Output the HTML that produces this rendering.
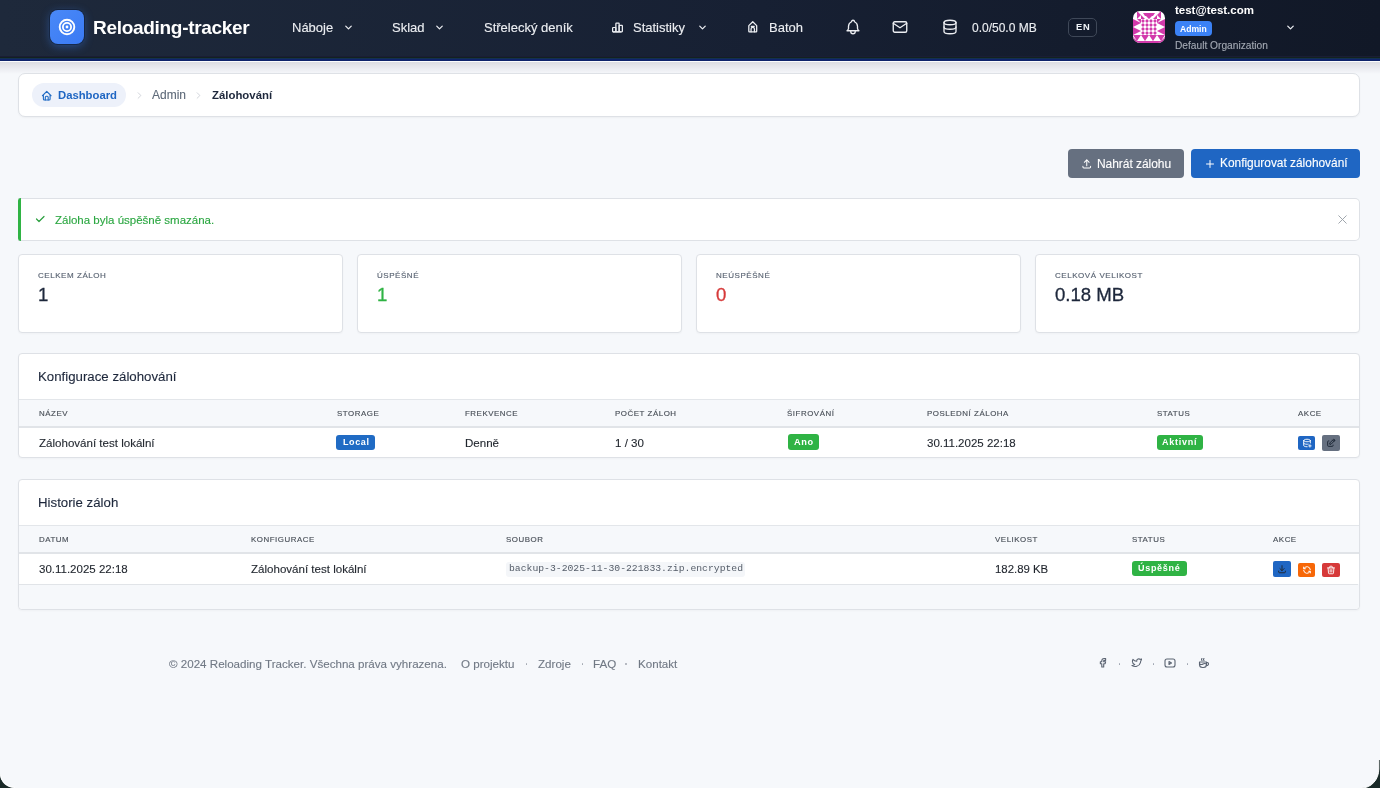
<!DOCTYPE html>
<html lang="cs"><head><meta charset="utf-8"><title>Zálohování - Reloading-tracker</title>
<style>
html,body{margin:0;padding:0;}
body{width:1380px;height:788px;overflow:hidden;position:relative;background:#f6f8fb;font-family:"Liberation Sans",sans-serif;}
.t{will-change:transform;position:absolute;line-height:1;white-space:nowrap;-webkit-text-stroke:0.12px currentColor;}
.b{position:absolute;display:block;}
</style></head><body>
<div class="b" style="left:0px;top:0px;width:1380px;height:57px;background:linear-gradient(90deg,#1e293b 0%,#172033 55%,#111827 100%);"></div>
<div class="b" style="left:0px;top:56px;width:1380px;height:1px;background:#1a1d35;"></div>
<div class="b" style="left:0px;top:57px;width:1380px;height:1px;background:#13221f;"></div>
<div class="b" style="left:0px;top:58px;width:1380px;height:1px;background:#143050;"></div>
<div class="b" style="left:0px;top:59px;width:1380px;height:1.5px;background:#0e236a;"></div>
<div class="b" style="left:0px;top:60.5px;width:1380px;height:1.5px;background:#fbfcfc;"></div>
<div class="b" style="left:0px;top:62px;width:1380px;height:12px;background:linear-gradient(180deg,#dcdde2 0%,#e8e9ee 45%,#f6f8fb 100%);"></div>
<div class="b" style="left:50px;top:10px;width:34px;height:34px;background:linear-gradient(135deg,#4a89f7,#3a7af4);border-radius:8px;box-shadow:0 0 0 1px rgba(10,20,40,.5),0 2px 10px rgba(59,130,246,.45);"></div>
<svg class="b" style="left:58px;top:18px" width="18" height="18" viewBox="0 0 18 18"><circle cx="9" cy="9" r="7.3" fill="none" stroke="#fff" stroke-width="1.9"/><circle cx="9" cy="9" r="4.1" fill="none" stroke="#fff" stroke-width="1.8"/><circle cx="9" cy="9" r="1.4" fill="#fff"/></svg>
<div class="t" style="left:92.6px;top:18.12px;font-size:19px;color:#ffffff;font-weight:bold;-webkit-text-stroke:0;letter-spacing:-0.3px;">Reloading-tracker</div>
<div class="t" style="left:292px;top:20.50px;font-size:13px;color:#eceef2;">Náboje</div>
<div class="t" style="left:392px;top:20.50px;font-size:13px;color:#eceef2;">Sklad</div>
<div class="t" style="left:484px;top:20.50px;font-size:13px;color:#eceef2;">Střelecký deník</div>
<div class="t" style="left:633px;top:20.50px;font-size:13px;color:#eceef2;">Statistiky</div>
<div class="t" style="left:769px;top:20.50px;font-size:13px;color:#eceef2;">Batoh</div>
<svg class="b" style="left:342.5px;top:22.1px" width="11" height="11" viewBox="0 0 24 24" fill="none" stroke="#eceef2" stroke-width="2.7" stroke-linecap="round" stroke-linejoin="round"><path d="M6 9l6 6l6 -6"/></svg>
<svg class="b" style="left:434.0px;top:22.1px" width="11" height="11" viewBox="0 0 24 24" fill="none" stroke="#eceef2" stroke-width="2.7" stroke-linecap="round" stroke-linejoin="round"><path d="M6 9l6 6l6 -6"/></svg>
<svg class="b" style="left:696.8px;top:22.1px" width="11" height="11" viewBox="0 0 24 24" fill="none" stroke="#eceef2" stroke-width="2.7" stroke-linecap="round" stroke-linejoin="round"><path d="M6 9l6 6l6 -6"/></svg>
<svg class="b" style="left:1284.8px;top:22.1px" width="11" height="11" viewBox="0 0 24 24" fill="none" stroke="#eceef2" stroke-width="2.7" stroke-linecap="round" stroke-linejoin="round"><path d="M6 9l6 6l6 -6"/></svg>
<svg class="b" style="left:611px;top:20.8px" width="13" height="13" viewBox="0 0 24 24" fill="none" stroke="#eceef2" stroke-width="2.3" stroke-linecap="round" stroke-linejoin="round"><path d="M3 13a1 1 0 0 1 1 -1h4a1 1 0 0 1 1 1v6a1 1 0 0 1 -1 1h-4a1 1 0 0 1 -1 -1z"/><path d="M9 5a1 1 0 0 1 1 -1h4a1 1 0 0 1 1 1v14a1 1 0 0 1 -1 1h-4a1 1 0 0 1 -1 -1z"/><path d="M15 9a1 1 0 0 1 1 -1h4a1 1 0 0 1 1 1v10a1 1 0 0 1 -1 1h-4a1 1 0 0 1 -1 -1z"/><path d="M4 20h14"/></svg>
<svg class="b" style="left:746.2px;top:19.8px" width="13.5" height="13.5" viewBox="0 0 24 24" fill="none" stroke="#eceef2" stroke-width="2.3" stroke-linecap="round" stroke-linejoin="round"><path d="M5 20v-10l7 -7l7 7v10a1 1 0 0 1 -1 1h-12a1 1 0 0 1 -1 -1z"/><path d="M9 21v-5a3 3 0 0 1 6 0v5"/><path d="M9.5 11.5h5"/></svg>
<svg class="b" style="left:844.3px;top:18.1px" width="18" height="18" viewBox="0 0 24 24" fill="none" stroke="#eceef2" stroke-width="1.8" stroke-linecap="round" stroke-linejoin="round"><path d="M10 5a2 2 0 1 1 4 0a7 7 0 0 1 4 6v3a4 4 0 0 0 2 3h-16a4 4 0 0 0 2 -3v-3a7 7 0 0 1 4 -6"/><path d="M9 17v1a3 3 0 0 0 6 0v-1"/></svg>
<svg class="b" style="left:891px;top:18.2px" width="18" height="18" viewBox="0 0 24 24" fill="none" stroke="#eceef2" stroke-width="1.8" stroke-linecap="round" stroke-linejoin="round"><path d="M3 7a2 2 0 0 1 2 -2h14a2 2 0 0 1 2 2v10a2 2 0 0 1 -2 2h-14a2 2 0 0 1 -2 -2v-10z"/><path d="M3 7l9 6l9 -6"/></svg>
<svg class="b" style="left:940.7px;top:18.2px" width="18" height="18" viewBox="0 0 24 24" fill="none" stroke="#eceef2" stroke-width="1.8" stroke-linecap="round" stroke-linejoin="round"><path d="M4 6a8 3 0 1 0 16 0a8 3 0 1 0 -16 0"/><path d="M4 6v6a8 3 0 0 0 16 0v-6"/><path d="M4 12v6a8 3 0 0 0 16 0v-6"/></svg>
<div class="t" style="left:972px;top:22.14px;font-size:12px;color:#eceef2;">0.0/50.0 MB</div>
<div class="b" style="left:1068px;top:18px;width:29px;height:18.5px;border:1.5px solid #3f4858;border-radius:5px;box-sizing:border-box;"></div>
<div class="t" style="left:1076.3px;top:23.13px;font-size:9.3px;color:#f1f5f9;font-weight:bold;-webkit-text-stroke:0;letter-spacing:0.9px;">EN</div>
<svg class="b" style="left:1133px;top:11px" width="32" height="32" viewBox="0 0 32 32"><defs><clipPath id="avc"><rect width="32" height="32" rx="7"/></clipPath></defs><g clip-path="url(#avc)"><rect width="32" height="32" fill="#ffffff"/><path d="M0 0L4 0L0 4ZM32 0L28 0L32 4ZM4 0L8 4L4 8ZM28 0L24 4L28 8ZM10 2L22 2L20 5L12 5ZM13 5L19 5L16 8ZM8 4L12 8L8 8ZM24 4L20 8L24 8ZM0 8L8 12L0 16ZM32 8L24 12L32 16ZM0 16L8 20L0 24ZM32 16L24 20L32 24ZM4 8L8 8L8 12ZM28 8L24 8L24 12ZM10 8.1L11.9 10L10 11.9L8.1 10ZM14 8.1L15.9 10L14 11.9L12.1 10ZM18 8.1L19.9 10L18 11.9L16.1 10ZM22 8.1L23.9 10L22 11.9L20.1 10ZM10 12.1L11.9 14L10 15.9L8.1 14ZM14 12.1L15.9 14L14 15.9L12.1 14ZM18 12.1L19.9 14L18 15.9L16.1 14ZM22 12.1L23.9 14L22 15.9L20.1 14ZM10 16.1L11.9 18L10 19.9L8.1 18ZM14 16.1L15.9 18L14 19.9L12.1 18ZM18 16.1L19.9 18L18 19.9L16.1 18ZM22 16.1L23.9 18L22 19.9L20.1 18ZM10 20.1L11.9 22L10 23.9L8.1 22ZM14 20.1L15.9 22L14 23.9L12.1 22ZM18 20.1L19.9 22L18 23.9L16.1 22ZM22 20.1L23.9 22L22 23.9L20.1 22ZM0 24L8 24L4 30ZM8 24L16 24L12 30ZM16 24L24 24L20 30ZM24 24L32 24L28 30ZM0 30L32 30L32 32L0 32ZM0 26L4 30L0 30ZM32 26L28 30L32 30Z" fill="#d23aab"/></g></svg>
<div class="t" style="left:1175px;top:5.27px;font-size:11.5px;color:#ffffff;font-weight:bold;-webkit-text-stroke:0;">test@test.com</div>
<div class="b" style="left:1175px;top:21px;width:37px;height:15px;background:#3b82f6;border-radius:4px;"></div>
<div class="t" style="left:1180px;top:24.52px;font-size:8.6px;color:#ffffff;font-weight:bold;-webkit-text-stroke:0;">Admin</div>
<div class="t" style="left:1175px;top:40.67px;font-size:10.2px;color:#a3a9b3;">Default Organization</div>
<div class="b" style="left:18px;top:73px;width:1342px;height:44px;background:#fff;border:1px solid #dee1e6;border-radius:7px;box-sizing:border-box;box-shadow:0 1px 2px rgba(0,0,0,.04);"></div>
<div class="b" style="left:32px;top:83px;width:94px;height:24px;background:#edf1fa;border-radius:12px;"></div>
<svg class="b" style="left:41px;top:89.5px" width="11.5" height="11.5" viewBox="0 0 24 24" fill="none" stroke="#206bc4" stroke-width="2.3" stroke-linecap="round" stroke-linejoin="round"><path d="M5 12l-2 0l9 -9l9 9l-2 0"/><path d="M5 12v7a2 2 0 0 0 2 2h10a2 2 0 0 0 2 -2v-7"/><path d="M9 21v-6a2 2 0 0 1 2 -2h2a2 2 0 0 1 2 2v6"/></svg>
<div class="t" style="left:58px;top:89.83px;font-size:11.3px;color:#1f66c3;font-weight:bold;-webkit-text-stroke:0;">Dashboard</div>
<svg class="b" style="left:133.5px;top:89.5px" width="11" height="11" viewBox="0 0 24 24" fill="none" stroke="#c8ccd3" stroke-width="1.8" stroke-linecap="round" stroke-linejoin="round"><path d="M9 6l6 6l-6 6"/></svg>
<svg class="b" style="left:193px;top:89.5px" width="11" height="11" viewBox="0 0 24 24" fill="none" stroke="#c8ccd3" stroke-width="1.8" stroke-linecap="round" stroke-linejoin="round"><path d="M9 6l6 6l-6 6"/></svg>
<div class="t" style="left:152px;top:89.24px;font-size:12px;color:#5f6b7a;">Admin</div>
<div class="t" style="left:211.5px;top:89.75px;font-size:11.4px;color:#1d273b;font-weight:bold;-webkit-text-stroke:0;">Zálohování</div>
<div class="b" style="left:1068px;top:149px;width:116px;height:29px;background:#667080;border-radius:4px;"></div>
<svg class="b" style="left:1081px;top:158.3px" width="11.5" height="11.5" viewBox="0 0 24 24" fill="none" stroke="#fff" stroke-width="2.1" stroke-linecap="round" stroke-linejoin="round"><path d="M4 17v2a2 2 0 0 0 2 2h12a2 2 0 0 0 2 -2v-2"/><path d="M7 9l5 -5l5 5"/><path d="M12 4l0 12"/></svg>
<div class="t" style="left:1096.5px;top:158.04px;font-size:12px;color:#ffffff;letter-spacing:-0.05px;">Nahrát zálohu</div>
<div class="b" style="left:1191px;top:149px;width:169px;height:29px;background:#1f66c3;border-radius:4px;"></div>
<svg class="b" style="left:1204.3px;top:157.8px" width="12" height="12" viewBox="0 0 24 24" fill="none" stroke="#fff" stroke-width="2" stroke-linecap="round" stroke-linejoin="round"><path d="M12 5l0 14"/><path d="M5 12l14 0"/></svg>
<div class="t" style="left:1219.5px;top:158.13px;font-size:11.9px;color:#ffffff;">Konfigurovat zálohování</div>
<div class="b" style="left:18px;top:198px;width:1342px;height:43px;background:#fff;border:1px solid #dee1e6;border-left:0;border-radius:0 5px 5px 0;box-sizing:border-box;"></div>
<div class="b" style="left:17.5px;top:198px;width:3.5px;height:43px;background:#2fb344;border-radius:3px 0 0 3px;"></div>
<svg class="b" style="left:33.5px;top:213.3px" width="12" height="12" viewBox="0 0 24 24" fill="none" stroke="#2a9f3e" stroke-width="2.4" stroke-linecap="round" stroke-linejoin="round"><path d="M5 12l5 5l10 -10"/></svg>
<div class="t" style="left:55px;top:214.87px;font-size:11.5px;color:#2aa640;">Záloha byla úspěšně smazána.</div>
<svg class="b" style="left:1334.5px;top:211.5px" width="15" height="15" viewBox="0 0 24 24" fill="none" stroke="#9aa0a8" stroke-width="1.5" stroke-linecap="round" stroke-linejoin="round"><path d="M18 6l-12 12"/><path d="M6 6l12 12"/></svg>
<div class="b" style="left:18px;top:254px;width:325px;height:79px;background:#fff;border:1px solid #dee1e6;border-radius:4px;box-sizing:border-box;box-shadow:0 1px 2px rgba(0,0,0,.03);"></div>
<div class="t" style="left:38px;top:271.83px;font-size:8px;color:#5a6473;letter-spacing:0.55px;-webkit-text-stroke:0.15px currentColor;">CELKEM ZÁLOH</div>
<div class="t" style="left:38px;top:285.76px;font-size:18.6px;color:#1d273b;-webkit-text-stroke:0.3px currentColor;">1</div>
<div class="b" style="left:357px;top:254px;width:325px;height:79px;background:#fff;border:1px solid #dee1e6;border-radius:4px;box-sizing:border-box;box-shadow:0 1px 2px rgba(0,0,0,.03);"></div>
<div class="t" style="left:377px;top:271.83px;font-size:8px;color:#5a6473;letter-spacing:0.55px;-webkit-text-stroke:0.15px currentColor;">ÚSPĚŠNÉ</div>
<div class="t" style="left:377px;top:285.76px;font-size:18.6px;color:#2fb344;-webkit-text-stroke:0.3px currentColor;">1</div>
<div class="b" style="left:696px;top:254px;width:325px;height:79px;background:#fff;border:1px solid #dee1e6;border-radius:4px;box-sizing:border-box;box-shadow:0 1px 2px rgba(0,0,0,.03);"></div>
<div class="t" style="left:716px;top:271.83px;font-size:8px;color:#5a6473;letter-spacing:0.55px;-webkit-text-stroke:0.15px currentColor;">NEÚSPĚŠNÉ</div>
<div class="t" style="left:716px;top:285.76px;font-size:18.6px;color:#d63939;-webkit-text-stroke:0.3px currentColor;">0</div>
<div class="b" style="left:1035px;top:254px;width:325px;height:79px;background:#fff;border:1px solid #dee1e6;border-radius:4px;box-sizing:border-box;box-shadow:0 1px 2px rgba(0,0,0,.03);"></div>
<div class="t" style="left:1055px;top:271.83px;font-size:8px;color:#5a6473;letter-spacing:0.55px;-webkit-text-stroke:0.15px currentColor;">CELKOVÁ VELIKOST</div>
<div class="t" style="left:1055px;top:285.76px;font-size:18.6px;color:#1d273b;-webkit-text-stroke:0.3px currentColor;">0.18 MB</div>
<div class="b" style="left:18px;top:353px;width:1342px;height:105px;background:#fff;border:1px solid #dee1e6;border-radius:4px;box-sizing:border-box;box-shadow:0 1px 2px rgba(0,0,0,.03);"></div>
<div class="t" style="left:38px;top:370.28px;font-size:13.25px;color:#1d273b;">Konfigurace zálohování</div>
<div class="b" style="left:19px;top:399px;width:1340px;height:1px;background:#e3e6ea;"></div>
<div class="b" style="left:19px;top:400px;width:1340px;height:26px;background:#f6f8fb;"></div>
<div class="b" style="left:19px;top:426px;width:1340px;height:1.5px;background:#e1e4e8;"></div>
<div class="t" style="left:39px;top:410.11px;font-size:7.9px;color:#4a5059;letter-spacing:0.55px;-webkit-text-stroke:0.15px currentColor;">NÁZEV</div>
<div class="t" style="left:336.5px;top:410.11px;font-size:7.9px;color:#4a5059;letter-spacing:0.55px;-webkit-text-stroke:0.15px currentColor;">STORAGE</div>
<div class="t" style="left:464.5px;top:410.11px;font-size:7.9px;color:#4a5059;letter-spacing:0.55px;-webkit-text-stroke:0.15px currentColor;">FREKVENCE</div>
<div class="t" style="left:614.5px;top:410.11px;font-size:7.9px;color:#4a5059;letter-spacing:0.55px;-webkit-text-stroke:0.15px currentColor;">POČET ZÁLOH</div>
<div class="t" style="left:787px;top:410.11px;font-size:7.9px;color:#4a5059;letter-spacing:0.55px;-webkit-text-stroke:0.15px currentColor;">ŠIFROVÁNÍ</div>
<div class="t" style="left:927px;top:410.11px;font-size:7.9px;color:#4a5059;letter-spacing:0.55px;-webkit-text-stroke:0.15px currentColor;">POSLEDNÍ ZÁLOHA</div>
<div class="t" style="left:1156.5px;top:410.11px;font-size:7.9px;color:#4a5059;letter-spacing:0.55px;-webkit-text-stroke:0.15px currentColor;">STATUS</div>
<div class="t" style="left:1297.5px;top:410.11px;font-size:7.9px;color:#4a5059;letter-spacing:0.55px;-webkit-text-stroke:0.15px currentColor;">AKCE</div>
<div class="t" style="left:39px;top:437.82px;font-size:11.55px;color:#1f242c;">Zálohování test lokální</div>
<div class="b" style="left:336px;top:434.5px;width:39px;height:15.5px;background:#206bc4;border-radius:3px;"></div>
<div class="t" style="left:342.5px;top:438.38px;font-size:9px;color:#fff;font-weight:bold;-webkit-text-stroke:0;letter-spacing:0.6px;">Local</div>
<div class="t" style="left:464.5px;top:437.82px;font-size:11.55px;color:#1f242c;">Denně</div>
<div class="t" style="left:614.5px;top:437.82px;font-size:11.55px;color:#1f242c;">1 / 30</div>
<div class="b" style="left:788px;top:434px;width:31px;height:16px;background:#2fb344;border-radius:3px;"></div>
<div class="t" style="left:793.5px;top:438.21px;font-size:9.2px;color:#fff;font-weight:bold;-webkit-text-stroke:0;letter-spacing:0.6px;">Ano</div>
<div class="t" style="left:927px;top:437.87px;font-size:11.5px;color:#1f242c;">30.11.2025 22:18</div>
<div class="b" style="left:1156.5px;top:434.5px;width:46.5px;height:15.5px;background:#2fb344;border-radius:3px;"></div>
<div class="t" style="left:1162px;top:438.38px;font-size:9px;color:#fff;font-weight:bold;-webkit-text-stroke:0;letter-spacing:0.75px;">Aktivní</div>
<div class="b" style="left:1298px;top:436px;width:17px;height:14px;background:#1f66c3;border-radius:2px;"></div>
<svg class="b" style="left:1301.5px;top:438px" width="10" height="10" viewBox="0 0 24 24" fill="none" stroke="#fff" stroke-width="2.2" stroke-linecap="round" stroke-linejoin="round"><path d="M4 6c0 1.657 3.582 3 8 3s8 -1.343 8 -3s-3.582 -3 -8 -3s-8 1.343 -8 3"/><path d="M4 6v6c0 1.657 3.582 3 8 3c1.075 0 2.1 -.08 3.037 -.224"/><path d="M20 12v-6"/><path d="M4 12v6c0 1.657 3.582 3 8 3c.166 0 .331 -.002 .495 -.006"/><path d="M16 19h6"/><path d="M19 16v6"/></svg>
<div class="b" style="left:1322px;top:435px;width:17.5px;height:15.5px;background:#667080;border-radius:2px;"></div>
<svg class="b" style="left:1325.8px;top:437.8px" width="10" height="10" viewBox="0 0 24 24" fill="none" stroke="#1f2937" stroke-width="2.4" stroke-linecap="round" stroke-linejoin="round"><path d="M7 7h-1a2 2 0 0 0 -2 2v9a2 2 0 0 0 2 2h9a2 2 0 0 0 2 -2v-1"/><path d="M20.385 6.585a2.1 2.1 0 0 0 -2.97 -2.97l-8.415 8.385v3h3l8.385 -8.415z"/><path d="M16 5l3 3"/></svg>
<div class="b" style="left:18px;top:479px;width:1342px;height:131px;background:#fff;border:1px solid #dee1e6;border-radius:4px;box-sizing:border-box;box-shadow:0 1px 2px rgba(0,0,0,.03);"></div>
<div class="b" style="left:19px;top:584px;width:1340px;height:25px;background:#f6f8fb;border-radius:0 0 4px 4px;"></div>
<div class="b" style="left:19px;top:583.5px;width:1339px;height:1.5px;background:#e1e4e8;"></div>
<div class="t" style="left:38px;top:496.28px;font-size:13.25px;color:#1d273b;">Historie záloh</div>
<div class="b" style="left:19px;top:525px;width:1340px;height:1px;background:#e3e6ea;"></div>
<div class="b" style="left:19px;top:526px;width:1340px;height:26px;background:#f6f8fb;"></div>
<div class="b" style="left:19px;top:552px;width:1340px;height:1.5px;background:#e1e4e8;"></div>
<div class="t" style="left:39px;top:536.31px;font-size:7.9px;color:#4a5059;letter-spacing:0.55px;-webkit-text-stroke:0.15px currentColor;">DATUM</div>
<div class="t" style="left:250.5px;top:536.31px;font-size:7.9px;color:#4a5059;letter-spacing:0.55px;-webkit-text-stroke:0.15px currentColor;">KONFIGURACE</div>
<div class="t" style="left:505.5px;top:536.31px;font-size:7.9px;color:#4a5059;letter-spacing:0.55px;-webkit-text-stroke:0.15px currentColor;">SOUBOR</div>
<div class="t" style="left:994.5px;top:536.31px;font-size:7.9px;color:#4a5059;letter-spacing:0.55px;-webkit-text-stroke:0.15px currentColor;">VELIKOST</div>
<div class="t" style="left:1132px;top:536.31px;font-size:7.9px;color:#4a5059;letter-spacing:0.55px;-webkit-text-stroke:0.15px currentColor;">STATUS</div>
<div class="t" style="left:1273px;top:536.31px;font-size:7.9px;color:#4a5059;letter-spacing:0.55px;-webkit-text-stroke:0.15px currentColor;">AKCE</div>
<div class="t" style="left:39px;top:563.87px;font-size:11.5px;color:#1f242c;">30.11.2025 22:18</div>
<div class="t" style="left:250.5px;top:563.82px;font-size:11.55px;color:#1f242c;">Zálohování test lokální</div>
<div class="b" style="left:506px;top:561.5px;width:239px;height:15px;background:#f4f6f9;border-radius:3px;"></div>
<div class="t" style="left:509px;top:564.05px;font-size:9.75px;color:#545c68;font-family:'Liberation Mono',monospace;-webkit-text-stroke:0;">backup-3-2025-11-30-221833.zip.encrypted</div>
<div class="t" style="left:994.5px;top:563.95px;font-size:11.4px;color:#1f242c;">182.89 KB</div>
<div class="b" style="left:1132px;top:560.5px;width:55px;height:15.5px;background:#2fb344;border-radius:3px;"></div>
<div class="t" style="left:1137.5px;top:564.38px;font-size:9px;color:#fff;font-weight:bold;-webkit-text-stroke:0;letter-spacing:0.7px;">Úspěšné</div>
<div class="b" style="left:1273px;top:560.5px;width:18px;height:16px;background:#1f66c3;border-radius:2px;"></div>
<svg class="b" style="left:1277px;top:563.5px" width="10" height="10" viewBox="0 0 24 24" fill="none" stroke="#1f2937" stroke-width="2.4" stroke-linecap="round" stroke-linejoin="round"><path d="M4 17v2a2 2 0 0 0 2 2h12a2 2 0 0 0 2 -2v-2"/><path d="M7 11l5 5l5 -5"/><path d="M12 4l0 12"/></svg>
<div class="b" style="left:1298px;top:562.5px;width:17px;height:14px;background:#f76707;border-radius:2px;"></div>
<svg class="b" style="left:1301.5px;top:564.5px" width="10" height="10" viewBox="0 0 24 24" fill="none" stroke="#fff" stroke-width="2.4" stroke-linecap="round" stroke-linejoin="round"><path d="M20 11a8.1 8.1 0 0 0 -15.5 -2m-.5 -4v4h4"/><path d="M4 13a8.1 8.1 0 0 0 15.5 2m.5 4v-4h-4"/></svg>
<div class="b" style="left:1322px;top:562.5px;width:17.5px;height:14px;background:#d63939;border-radius:2px;"></div>
<svg class="b" style="left:1325.8px;top:564.5px" width="10" height="10" viewBox="0 0 24 24" fill="none" stroke="#fff" stroke-width="2.2" stroke-linecap="round" stroke-linejoin="round"><path d="M4 7l16 0"/><path d="M10 11l0 6"/><path d="M14 11l0 6"/><path d="M5 7l1 12a2 2 0 0 0 2 2h8a2 2 0 0 0 2 -2l1 -12"/><path d="M9 7v-3a1 1 0 0 1 1 -1h4a1 1 0 0 1 1 1v3"/></svg>
<div class="t" style="left:168.5px;top:657.68px;font-size:11.6px;color:#717985;">© 2024 Reloading Tracker. Všechna práva vyhrazena.</div>
<div class="t" style="left:460.5px;top:657.68px;font-size:11.6px;color:#717985;">O projektu</div>
<div class="t" style="left:537.5px;top:657.68px;font-size:11.6px;color:#717985;">Zdroje</div>
<div class="t" style="left:593px;top:657.68px;font-size:11.6px;color:#717985;">FAQ</div>
<div class="t" style="left:637.5px;top:657.68px;font-size:11.6px;color:#717985;">Kontakt</div>
<div class="b" style="left:525.5px;top:663px;width:1.5px;height:1.5px;background:#a0a6af;border-radius:1px;"></div>
<div class="b" style="left:581.5px;top:663px;width:1.5px;height:1.5px;background:#a0a6af;border-radius:1px;"></div>
<div class="b" style="left:625px;top:663px;width:1.5px;height:1.5px;background:#a0a6af;border-radius:1px;"></div>
<svg class="b" style="left:1097px;top:657px" width="11.5" height="11.5" viewBox="0 0 24 24" fill="none" stroke="#5b6472" stroke-width="2.3" stroke-linecap="round" stroke-linejoin="round"><path d="M7 10v4h3v7h4v-7h3l1 -4h-4v-2a1 1 0 0 1 1 -1h3v-4h-3a5 5 0 0 0 -5 5v2h-3"/></svg>
<svg class="b" style="left:1130.5px;top:656.8px" width="11.5" height="11.5" viewBox="0 0 24 24" fill="none" stroke="#5b6472" stroke-width="2.2" stroke-linecap="round" stroke-linejoin="round"><path d="M22 4.01c-1 .49 -1.98 .689 -3 .99c-1.121 -1.265 -2.783 -1.335 -4.38 -.737s-2.643 2.06 -2.62 3.737v1c-3.245 .083 -6.135 -1.395 -8 -4c0 0 -4.182 7.433 4 11c-1.872 1.247 -3.739 2.088 -6 2c3.308 1.803 6.913 2.423 10.034 1.517c3.58 -1.04 6.522 -3.723 7.651 -7.742a13.84 13.84 0 0 0 .497 -2.753c-.002 -.249 1.51 -2.772 1.818 -4.013z"/></svg>
<svg class="b" style="left:1164px;top:656.5px" width="12" height="12" viewBox="0 0 24 24" fill="none" stroke="#5b6472" stroke-width="2.2" stroke-linecap="round" stroke-linejoin="round"><path d="M2 8a4 4 0 0 1 4 -4h12a4 4 0 0 1 4 4v8a4 4 0 0 1 -4 4h-12a4 4 0 0 1 -4 -4v-8z"/><path d="M10 9l5 3l-5 3z"/></svg>
<svg class="b" style="left:1197.8px;top:656.5px" width="12" height="12" viewBox="0 0 24 24" fill="none" stroke="#5b6472" stroke-width="2.2" stroke-linecap="round" stroke-linejoin="round"><path d="M3 14c.83 .642 2.077 1.017 3.5 1c1.423 .017 2.67 -.358 3.5 -1c.83 -.642 2.077 -1.017 3.5 -1c1.423 -.017 2.67 .358 3.5 1"/><path d="M8 3a2.4 2.4 0 0 0 -1 2a2.4 2.4 0 0 0 1 2"/><path d="M12 3a2.4 2.4 0 0 0 -1 2a2.4 2.4 0 0 0 1 2"/><path d="M3 10h14v5a6 6 0 0 1 -6 6h-2a6 6 0 0 1 -6 -6v-5z"/><path d="M16.746 16.726a3 3 0 1 0 .252 -5.555"/></svg>
<div class="b" style="left:1118.5px;top:663px;width:1.5px;height:1.5px;background:#9ca3af;border-radius:1px;"></div>
<div class="b" style="left:1152.5px;top:663px;width:1.5px;height:1.5px;background:#9ca3af;border-radius:1px;"></div>
<div class="b" style="left:1186.5px;top:663px;width:1.5px;height:1.5px;background:#9ca3af;border-radius:1px;"></div>
<svg class="b" style="left:0;top:774px" width="15" height="14" viewBox="0 0 15 14"><path d="M0 0 A15 14 0 0 0 15 14 L0 14Z" fill="#1a2a28"/><path d="M0.6 0.5 A14.5 13.5 0 0 0 15 13.4" fill="none" stroke="#ffffff" stroke-width="1"/></svg>
<svg class="b" style="left:1361px;top:760px" width="19" height="28" viewBox="0 0 19 28"><path d="M19 0 L17.8 0 L17.8 9 A17 19 0 0 1 0.8 28 L19 28Z" fill="#1a2a28"/><path d="M17.8 0 L17.8 9 A17 19 0 0 1 0.8 28" fill="none" stroke="#ffffff" stroke-width="1"/></svg>
</body></html>
